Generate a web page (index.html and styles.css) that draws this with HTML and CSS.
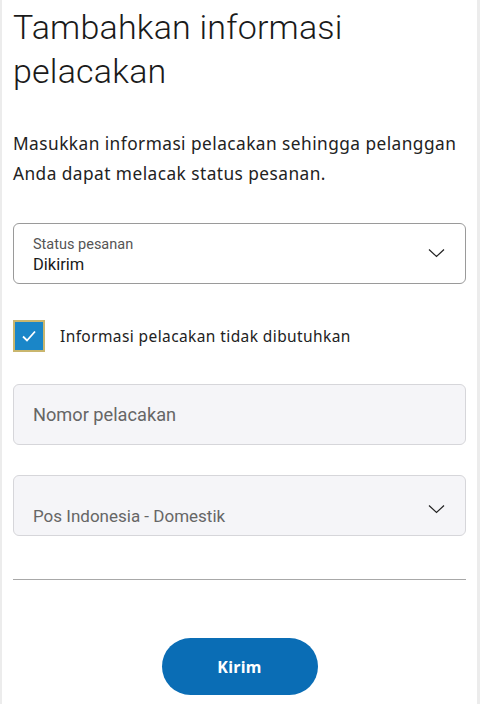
FILE: index.html
```html
<!DOCTYPE html>
<html lang="id">
<head>
<meta charset="utf-8">
<title>Tambahkan informasi pelacakan</title>
<link rel="stylesheet" href="styles.css">
</head>
<body>
<div class="page">
  <h1 class="title">Tambahkan informasi pelacakan</h1>
  <p class="intro">Masukkan informasi pelacakan sehingga pelanggan Anda dapat melacak status pesanan.</p>

  <div class="field select">
    <div class="field-text">
      <span class="field-label">Status pesanan</span>
      <span class="field-value">Dikirim</span>
    </div>
    <svg class="chev" width="17" height="10" viewBox="0 0 17 10"><path d="M1 1.5 L8.5 8.5 L16 1.5" fill="none" stroke="#222" stroke-width="1.2"/></svg>
  </div>

  <label class="check-row">
    <span class="checkbox">
      <svg width="20" height="16" viewBox="0 0 20 16"><path d="M4 8.5 L8 12.5 L16 3.5" fill="none" stroke="#fff" stroke-width="1.8"/></svg>
    </span>
    <span class="check-label">Informasi pelacakan tidak dibutuhkan</span>
  </label>

  <div class="field input disabled">
    <span class="placeholder big">Nomor pelacakan</span>
  </div>

  <div class="field select disabled carrier">
    <span class="placeholder">Pos Indonesia - Domestik</span>
    <svg class="chev" width="17" height="10" viewBox="0 0 17 10"><path d="M1 1.5 L8.5 8.5 L16 1.5" fill="none" stroke="#222" stroke-width="1.2"/></svg>
  </div>

  <hr class="divider">

  <div class="actions">
    <button class="btn">Kirim</button>
  </div>
</div>
</body>
</html>
```
FILE: styles.css
```css
* { box-sizing: border-box; }
html, body { margin: 0; padding: 0; background: #fff; }
body { font-family: "Noto Sans", "Open Sans", sans-serif; color: #2c2e2f; }
.page {
  min-height: 704px;
  border-left: 2px solid #ececec;
  border-right: 3px solid #ececec;
  padding: 0 11px 0 11px;
}
.title {
  margin: 0;
  padding-top: 5px;
  font-family: Roboto, "Liberation Sans", sans-serif;
  font-weight: 300;
  font-size: 34px;
  line-height: 44px;
  color: #1a1a1a;
  letter-spacing: 0.2px;
  width: 360px;
}
.intro {
  margin: 36px 0 0 0;
  font-size: 17.3px;
  line-height: 30px;
  letter-spacing: 0.45px;
  color: #222;
}
.field {
  height: 61px;
  border-radius: 6px;
  border: 1px solid #9a9a9a;
  display: flex;
  align-items: center;
  justify-content: space-between;
  padding: 0 19px 0 19px;
  font-family: Roboto, "Liberation Sans", sans-serif;
}
.select { margin-top: 34px; }
.field-text { display: flex; flex-direction: column; padding-top: 3px; }
.field-label { font-size: 14.5px; color: #555; line-height: 19px; }
.field-value { font-size: 16.5px; color: #1a1a1a; line-height: 22px; }
.chev { margin-top: -2px; margin-right: 1px; }
.check-row {
  display: flex;
  align-items: center;
  margin-top: 36px;
  gap: 15px;
}
.checkbox {
  width: 32px; height: 32px;
  background: #1a86c8;
  border: 2px solid #c9b66e;
  display: flex; align-items: center; justify-content: center;
}
.check-label { font-size: 15.5px; letter-spacing: 0.4px; color: #222; }
.disabled { background: #f5f5f8; border-color: #d6d6da; }
.input { margin-top: 32px; }
.placeholder { font-size: 17px; color: #666; }
.placeholder.big { font-size: 18.2px; }
.carrier { margin-top: 30px; align-items: flex-start; }
.carrier .placeholder { margin-top: 30px; }
.carrier .chev { margin-top: 28px; }
.divider {
  margin: 43px 0 0 0;
  border: 0;
  border-top: 1px solid #a8a8a8;
}
.actions { display: flex; justify-content: center; margin-top: 58px; }
.btn {
  width: 156px; height: 57px;
  border-radius: 29px;
  border: 0;
  background: #0a6db5;
  color: #fff;
  font-family: "Noto Sans", sans-serif;
  font-weight: 700;
  font-size: 16px;
  letter-spacing: 0.3px;
}
```
